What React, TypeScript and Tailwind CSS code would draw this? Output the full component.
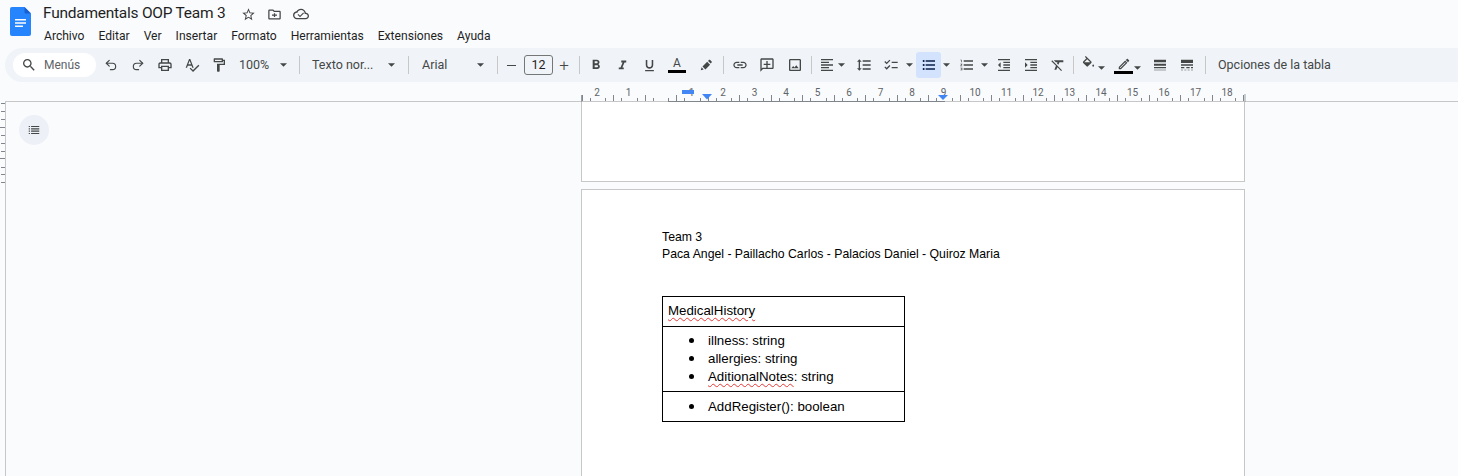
import { Redo2, Undo2 } from 'lucide-react'
import type { ReactNode } from 'react'

const ink = '#444746'

const paths = {
  star: 'M22 9.24l-7.19-.62L12 2 9.19 8.63 2 9.24l5.46 4.73L5.82 21 12 17.27 18.18 21l-1.63-7.03L22 9.24zM12 15.4l-3.76 2.27 1-4.28-3.32-2.88 4.38-.38L12 6.1l1.71 4.04 4.38.38-3.32 2.88 1 4.28L12 15.4z',
  move: 'M20 6h-8l-2-2H4c-1.1 0-2 .9-2 2v12c0 1.1.9 2 2 2h16c1.1 0 2-.9 2-2V8c0-1.1-.9-2-2-2zm0 12H4V6h5.17l2 2H20v10zM11 10v2H8v2h3v2h2v-2h3v-2h-3v-2z',
  cloud: 'M19.35 10.04C18.67 6.59 15.64 4 12 4 9.11 4 6.6 5.64 5.35 8.04 2.34 8.36 0 10.91 0 14c0 3.31 2.69 6 6 6h13c2.76 0 5-2.24 5-5 0-2.64-2.05-4.78-4.65-4.96zM19 18H6c-2.21 0-4-1.79-4-4s1.79-4 4-4h.71C7.37 7.69 9.48 6 12 6c3.04 0 5.5 2.46 5.5 5.5v.5H19c1.66 0 3 1.34 3 3s-1.34 3-3 3zM10.5 14.5l-2.5-2.5-1.2 1.2 3.7 3.7 6-6-1.2-1.2z',
  search: 'M15.5 14h-.79l-.28-.27C15.41 12.59 16 11.11 16 9.5 16 5.91 13.09 3 9.5 3S3 5.91 3 9.5 5.91 16 9.5 16c1.61 0 3.09-.59 4.23-1.57l.27.28v.79l5 4.99L20.49 19l-4.99-5zm-6 0C7.01 14 5 11.99 5 9.5S7.01 5 9.5 5 14 7.01 14 9.5 11.99 14 9.5 14z',
  print: 'M19 8h-1V3H6v5H5c-1.66 0-3 1.34-3 3v6h4v4h12v-4h4v-6c0-1.66-1.34-3-3-3zM8 5h8v3H8V5zm8 14H8v-4h8v4zm2-4v-2H6v2H4v-4c0-.55.45-1 1-1h14c.55 0 1 .45 1 1v4h-2z',
  spell: 'M12.45 16h2.09L9.43 3H7.57L2.46 16h2.09l1.12-3h5.64l1.14 3zm-6.02-5L8.5 5.48 10.57 11H6.43zm15.16.59l-8.09 8.09L9.83 16l-1.41 1.41 5.09 5.09L23 13l-1.41-1.41z',
  paint: 'M18 4V3c0-.55-.45-1-1-1H5c-.55 0-1 .45-1 1v4c0 .55.45 1 1 1h12c.55 0 1-.45 1-1V6h1v4H9v11c0 .55.45 1 1 1h2c.55 0 1-.45 1-1v-9h8V4h-3zm-2 2H6V4h10v2zM11 16v4h0v-4z',
  bold: 'M15.6 10.79c.97-.67 1.65-1.77 1.65-2.79 0-2.26-1.75-4-4-4H7v14h7.04c2.09 0 3.71-1.7 3.71-3.79 0-1.52-.86-2.82-2.15-3.42zM10 6.5h3c.83 0 1.5.67 1.5 1.5s-.67 1.5-1.5 1.5h-3v-3zm3.5 9H10v-3h3.5c.83 0 1.5.67 1.5 1.5s-.67 1.5-1.5 1.5z',
  italic: 'M10 4v3h2.21l-3.42 8H6v3h8v-3h-2.21l3.42-8H18V4z',
  underline: 'M12 17c3.31 0 6-2.69 6-6V3h-2.5v8c0 1.93-1.57 3.5-3.5 3.5S8.5 12.93 8.5 11V3H6v8c0 3.31 2.69 6 6 6zm-7 2v2h14v-2H5z',
  marker: 'M3 21l1.5-5 3.5 3.5zM6 14.5 14 6.5l5 5-8 8zM15.5 5l1.8-1.8c.4-.4 1-.4 1.4 0l3 3c.4.4.4 1 0 1.4L20 9.5z',
  pencil: 'M14.06 9.02l.92.92L5.92 19H5v-.92l9.06-9.06M17.66 3c-.25 0-.51.1-.7.29l-1.83 1.83 3.75 3.75 1.83-1.83c.39-.39.39-1.02 0-1.41l-2.34-2.34c-.2-.2-.45-.29-.71-.29zm-3.6 3.19L3 17.25V21h3.75L17.81 9.94l-3.75-3.75z',
  link: 'M3.9 12c0-1.71 1.39-3.1 3.1-3.1h4V7H7c-2.76 0-5 2.24-5 5s2.24 5 5 5h4v-1.9H7c-1.71 0-3.1-1.39-3.1-3.1zM8 13h8v-2H8v2zm9-6h-4v1.9h4c1.71 0 3.1 1.39 3.1 3.1s-1.39 3.1-3.1 3.1h-4V17h4c2.76 0 5-2.24 5-5s-2.24-5-5-5z',
  comment: 'M4 2h16c1.1 0 2 .9 2 2v12c0 1.1-.9 2-2 2H6l-4 4V4c0-1.1.9-2 2-2zm0 2v13.17L5.17 16H20V4H4zm7 2h2v4h4v2h-4v4h-2v-4H7v-2h4V6z',
  image: 'M19 3H5c-1.1 0-2 .9-2 2v14c0 1.1.9 2 2 2h14c1.1 0 2-.9 2-2V5c0-1.1-.9-2-2-2zm0 16H5V5h14v14zM13.96 12.29l-2.75 3.54-1.96-2.36L6.5 17h11l-3.54-4.71z',
  alignLeft: 'M15 15H3v2h12v-2zm0-8H3v2h12V7zM3 13h18v-2H3v2zm0 8h18v-2H3v2zM3 3v2h18V3H3z',
  spacing: 'M6 7h2.5L5 3.5 1.5 7H4v10H1.5L5 20.5 8.5 17H6V7zm4-2v2h12V5H10zm0 14h12v-2H10v2zm0-6h12v-2H10v2z',
  checklist: 'M13 7h9v2h-9V7zm0 8h9v2h-9v-2zM5.5 11 2 7.5l1.4-1.4 2.1 2.1 4.2-4.2 1.4 1.4L5.5 11zm0 8L2 15.5l1.4-1.4 2.1 2.1 4.2-4.2 1.4 1.4L5.5 19z',
  bullets: 'M4 10.5c-.83 0-1.5.67-1.5 1.5s.67 1.5 1.5 1.5 1.5-.67 1.5-1.5-.67-1.5-1.5-1.5zm0-6c-.83 0-1.5.67-1.5 1.5S3.17 7.5 4 7.5 5.5 6.83 5.5 6 4.83 4.5 4 4.5zm0 12c-.83 0-1.5.68-1.5 1.5s.68 1.5 1.5 1.5 1.5-.68 1.5-1.5-.67-1.5-1.5-1.5zM7 19h14v-2H7v2zm0-6h14v-2H7v2zm0-8v2h14V5H7z',
  numbers: 'M2 17h2v.5H3v1h1v.5H2v1h3v-4H2v1zm1-9h1V4H2v1h1v3zm-1 3h1.8L2 13.1v.9h3v-1H3.2L5 10.9V10H2v1zm5-6v2h14V5H7zm0 14h14v-2H7v2zm0-6h14v-2H7v2z',
  indentLess: 'M11 17h10v-2H11v2zm-8-5l4 4V8l-4 4zm0 9h18v-2H3v2zM3 3v2h18V3H3zm8 6h10V7H11v2zm0 4h10v-2H11v2z',
  indentMore: 'M3 21h18v-2H3v2zM3 8v8l4-4-4-4zm8 9h10v-2H11v2zM3 3v2h18V3H3zm8 6h10V7H11v2zm0 4h10v-2H11v2z',
  clear: 'M3.27 5L2 6.27l6.97 6.97L6.5 19h3l1.57-3.66L16.73 21 18 19.73 3.55 5.27 3.27 5zM6 5v.18L8.82 8h2.4l-.72 1.68 2.1 2.1L14.21 8H20V5H6z',
  fill: 'M16.56 8.94L7.62 0 6.21 1.41l2.38 2.38-5.15 5.15c-.59.59-.59 1.54 0 2.12l5.5 5.5c.29.29.68.44 1.06.44s.77-.15 1.06-.44l5.5-5.5c.59-.58.59-1.53 0-2.12zM5.21 10L10 5.21 14.79 10H5.21zM19.5 13s-1.5 1.6-1.5 2.6c0 .8.7 1.4 1.5 1.4s1.5-.6 1.5-1.4c0-1-1.5-2.6-1.5-2.6z',
  weight: 'M3 20h18v-1H3v1zm0-3h18v-2H3v2zm0-4h18v-3H3v3zm0-9v4h18V4H3z',
  dash: 'M3 4h18v5H3V4zm0 7h18v2H3v-2zm0 4h5v2H3v-2zm8 0h5v2h-5v-2zm7 0h3v2h-3v-2zM3 19h3v1H3v-1zm5 0h3v1H8v-1zm5 0h3v1h-3v-1zm5 0h3v1h-3v-1z',
  outline: 'M3 5h2v2H3V5zm4 0h14v2H7V5zM3 9h2v2H3V9zm4 0h14v2H7V9zm-4 4h2v2H3v-2zm4 0h14v2H7v-2zm-4 4h2v2H3v-2zm4 0h14v2H7v-2z',
}

function Glyph({ d, size = 16, color = ink }: { d: string; size?: number; color?: string }) {
  return (
    <svg width={size} height={size} viewBox="0 0 24 24" fill={color} className="shrink-0">
      <path d={d} fillRule="evenodd" />
    </svg>
  )
}

function Caret() {
  return (
    <svg width="7" height="4" viewBox="0 0 8 4" fill={ink} className="shrink-0">
      <path d="M0 0h8L4 4z" />
    </svg>
  )
}

function Btn({ className = 'w-[27px]', children }: { className?: string; children: ReactNode }) {
  return <div className={`flex h-full shrink-0 items-center justify-center ${className}`}>{children}</div>
}

function Sep({ className }: { className: string }) {
  return <div className={`h-[18px] w-px shrink-0 bg-[#c7c7c7] ${className}`} />
}

function Toolbar() {
  return (
    <div className="ml-[5px] flex h-[34px] items-center rounded-l-[17px] bg-[#f0f4f9] pl-2 text-[12.5px] text-[#444746]">
      <div className="flex h-6 w-[83px] shrink-0 items-center gap-[7px] rounded-full bg-white pl-2 text-[#5f6368]">
        <Glyph d={paths.search} size={16} />
        <span className="text-[12px]">Menús</span>
      </div>
      <div className="flex h-full items-center pl-px">
        <Btn><Undo2 size={14} strokeWidth={2} color={ink} /></Btn>
        <Btn><Redo2 size={14} strokeWidth={2} color={ink} /></Btn>
        <Btn><Glyph d={paths.print} /></Btn>
        <Btn><Glyph d={paths.spell} /></Btn>
        <Btn><Glyph d={paths.paint} /></Btn>
        <Btn className="w-[61px] justify-start pl-[7px]">
          <span className="w-[41px]">100%</span>
          <Caret />
        </Btn>
        <Sep className="mx-[6px]" />
        <Btn className="w-[96px] justify-start pl-[6px]">
          <span className="w-[76px]">Texto nor...</span>
          <Caret />
        </Btn>
        <Sep className="mx-[6px]" />
        <Btn className="w-[76px] justify-start pl-[7px]">
          <span className="w-[55px]">Arial</span>
          <Caret />
        </Btn>
        <Sep className="mx-[6px]" />
        <Btn className="w-[14px]">
          <div className="h-px w-[9px] bg-[#444746]" />
        </Btn>
        <div className="ml-[6px] flex h-[20px] w-[29px] shrink-0 items-center justify-center rounded-[3px] border border-[#747775] text-[#1f1f1f]">12</div>
        <Btn className="w-[22px]">
          <span className="text-[17px] font-light leading-none">+</span>
        </Btn>
        <Sep className="mr-[2px] ml-[4px]" />
        <Btn><Glyph d={paths.bold} /></Btn>
        <Btn><Glyph d={paths.italic} size={15} /></Btn>
        <Btn><Glyph d={paths.underline} size={15} /></Btn>
        <Btn className="w-[28px]">
          <div className="flex flex-col items-center">
            <span className="text-[12px] leading-[12px] text-[#444746]">A</span>
            <div className="mt-px h-[3px] w-[18px] bg-black" />
          </div>
        </Btn>
        <Btn className="ml-px w-[28px]"><Glyph d={paths.marker} size={14} /></Btn>
        <Sep className="mr-[2px] ml-[3px]" />
        <Btn><Glyph d={paths.link} /></Btn>
        <Btn><Glyph d={paths.comment} /></Btn>
        <Btn className="ml-px w-[27px]"><Glyph d={paths.image} /></Btn>
        <Sep className="mr-[2px] ml-[3px]" />
        <Btn className="w-[35px] gap-[3px]">
          <Glyph d={paths.alignLeft} />
          <Caret />
        </Btn>
        <Btn className="ml-px w-[27px]"><Glyph d={paths.spacing} /></Btn>
        <Btn><Glyph d={paths.checklist} /></Btn>
        <Btn className="w-[11px]"><Caret /></Btn>
        <div className="ml-px flex h-[26px] w-[25px] shrink-0 items-center justify-center rounded-[3px] bg-[#d3e3fd]">
          <Glyph d={paths.bullets} color="#0b1f4a" />
        </div>
        <Btn className="w-[11px]"><Caret /></Btn>
        <Btn className="ml-px w-[27px]"><Glyph d={paths.numbers} /></Btn>
        <Btn className="w-[9px]"><Caret /></Btn>
        <Btn className="ml-px w-[27px]"><Glyph d={paths.indentLess} /></Btn>
        <Btn><Glyph d={paths.indentMore} /></Btn>
        <Btn><Glyph d={paths.clear} /></Btn>
        <Sep className="mr-[2px] ml-[2px]" />
        <Btn className="w-[34px] gap-[2px]">
          <span className="mb-[3px]"><Glyph d={paths.fill} size={15} /></span>
          <span className="mt-[6px]"><Caret /></span>
        </Btn>
        <Btn className="w-[35px] gap-[1px]">
          <div className="flex flex-col items-center">
            <Glyph d={paths.pencil} size={14} />
            <div className="h-[3px] w-[19px] bg-black" />
          </div>
          <span className="mt-[6px]"><Caret /></span>
        </Btn>
        <Btn className="ml-px w-[27px]"><Glyph d={paths.weight} /></Btn>
        <Btn className="w-[28px]"><Glyph d={paths.dash} /></Btn>
        <Sep className="mr-[12px] ml-[4px]" />
        <span className="whitespace-nowrap text-[#444746]">Opciones de la tabla</span>
      </div>
    </div>
  )
}

// horizontal ruler, drawn on its own canvas
function Ruler() {
  const zero = 660.5
  const cm = 31.5
  const numbers = [-2, -1, 1, 2, 3, 4, 5, 6, 7, 8, 9, 10, 11, 12, 13, 14, 15, 16, 17, 18]
  const ticks: { x: number; h: number }[] = []
  for (let i = -10; i <= 76; i++) {
    const x = zero + i * (cm / 4)
    if (x < 581 || x > 1245.5 || i % 4 === 0) continue
    ticks.push({ x: Math.round(x) + 0.5, h: i % 2 === 0 ? 6 : 3 })
  }
  return (
    <svg width="1458" height="18" viewBox="0 84 1458 18" className="relative block">
      {ticks.map((t) => (
        <line key={t.x} x1={t.x} x2={t.x} y1={101} y2={101 - t.h} stroke="#80868b" />
      ))}
      {numbers.map((n) => (
        <text key={n} x={zero + n * cm - 0.5} y={96} fontSize="10" textAnchor="middle" fill="#5f6368" fontFamily="Roboto, sans-serif">
          {Math.abs(n)}
        </text>
      ))}
      <line x1="581.5" x2="581.5" y1="95" y2="107" stroke="#9aa0a6" />
      <line x1="1245" x2="1245" y1="94" y2="102" stroke="#9aa0a6" />
      <line x1="668" x2="945" y1="101.5" y2="101.5" stroke="#80868b" />
      <rect x="682" y="90" width="12" height="4" fill="#4285f4" />
      <path d="M702 94h10l-5 5.5z" fill="#4285f4" />
      <path d="M938 95h10l-5 5z" fill="#4285f4" />
    </svg>
  )
}

function SideRuler() {
  const ys = [103, 111, 119, 127, 135, 143, 151, 158, 167, 174, 182]
  return (
    <svg width="5" height="100" viewBox="0 101 5 100" className="block shrink-0">
      {ys.map((y, i) => (
        <line key={y} x1={i % 4 === 3 ? 0 : 1} x2={5} y1={y + 0.5} y2={y + 0.5} stroke="#80868b" />
      ))}
    </svg>
  )
}

function Squiggle({ children }: { children: ReactNode }) {
  return <span className="underline decoration-[#e53935] decoration-wavy decoration-1 underline-offset-2">{children}</span>
}

function Bullet({ children }: { children: ReactNode }) {
  return (
    <li className="flex h-[18px] items-center pl-[26px]">
      <span className="mr-[14px] h-[5px] w-[5px] rounded-full bg-black" />
      <span>{children}</span>
    </li>
  )
}

function ClassBox() {
  return (
    <div className="mt-[33px] w-[243px] border border-black text-[13.3px] text-black">
      <div className="flex h-[30px] items-center border-b border-black pb-[2px] pl-[5px]">
        <Squiggle>MedicalHistory</Squiggle>
      </div>
      <ul className="flex h-[65px] flex-col justify-center border-b border-black pb-[2px]">
        <Bullet>illness: string</Bullet>
        <Bullet>allergies: string</Bullet>
        <Bullet><Squiggle>AditionalNotes</Squiggle>: string</Bullet>
      </ul>
      <ul className="flex h-[29px] flex-col justify-center">
        <Bullet>AddRegister(): boolean</Bullet>
      </ul>
    </div>
  )
}

export default function App() {
  return (
    <div className="flex h-[476px] w-[1458px] flex-col overflow-hidden bg-[#f9fbfd] font-['Roboto',sans-serif]">
      <header className="flex h-[48px] shrink-0 pl-[10px]">
        <svg width="21" height="29" viewBox="0 0 21 29" className="mt-[7px] shrink-0">
          <path d="M2 0h12.5L21 6.5V27a2 2 0 0 1-2 2H2a2 2 0 0 1-2-2V2a2 2 0 0 1 2-2z" fill="#2684fc" />
          <path d="M14.5 0L21 6.5h-5a1.5 1.5 0 0 1-1.5-1.5z" fill="#1a5fd0" />
          <path d="M5 12h11v1.4H5zM5 15.3h11v1.4H5zM5 18.6h8v1.4H5z" fill="#fff" />
        </svg>
        <div className="ml-[12px] flex flex-col">
          <div className="flex h-[26px] items-center pt-[2px]">
            <span className="w-[182px] whitespace-nowrap text-[15.5px] tracking-[-0.25px] text-[#1f1f1f]">Fundamentals OOP Team 3</span>
            <div className="ml-[16px] flex items-center gap-[11px]">
              <Glyph d={paths.star} size={15} />
              <Glyph d={paths.move} size={15} />
              <Glyph d={paths.cloud} size={16} />
            </div>
          </div>
          <nav className="flex h-[20px] items-center gap-[14px] pl-px text-[12.1px] text-[#1f1f1f]">
            {['Archivo', 'Editar', 'Ver', 'Insertar', 'Formato', 'Herramientas', 'Extensiones', 'Ayuda'].map((item) => (
              <span key={item}>{item}</span>
            ))}
          </nav>
        </div>
      </header>

      <Toolbar />
      <div className="mt-[2px] shrink-0"><Ruler /></div>

      <div className="-mt-px flex min-h-0 flex-1">
        <SideRuler />
        <div className="flex min-h-0 flex-1 border-t border-l border-[#c7c7c7]">
          <aside className="w-[575px] shrink-0 pt-[13px] pl-[13px]">
            <div className="flex h-[30px] w-[30px] items-center justify-center rounded-full bg-[#edf0f7]">
              <Glyph d={paths.outline} size={14} />
            </div>
          </aside>
          <main className="flex w-[664px] shrink-0 flex-col gap-[7px]">
            <div className="h-[80px] shrink-0 border-x border-b border-[#c7c7c7] bg-white" />
            <div className="min-h-[300px] flex-1 border-x border-t border-[#c7c7c7] bg-white pt-[39px] pl-[80px] font-['Liberation_Sans',Arial,sans-serif] text-[12.25px] leading-[17px] text-black">
              <p>Team 3</p>
              <p>Paca Angel - Paillacho Carlos - Palacios Daniel - Quiroz Maria</p>
              <ClassBox />
            </div>
          </main>
        </div>
      </div>
    </div>
  )
}
